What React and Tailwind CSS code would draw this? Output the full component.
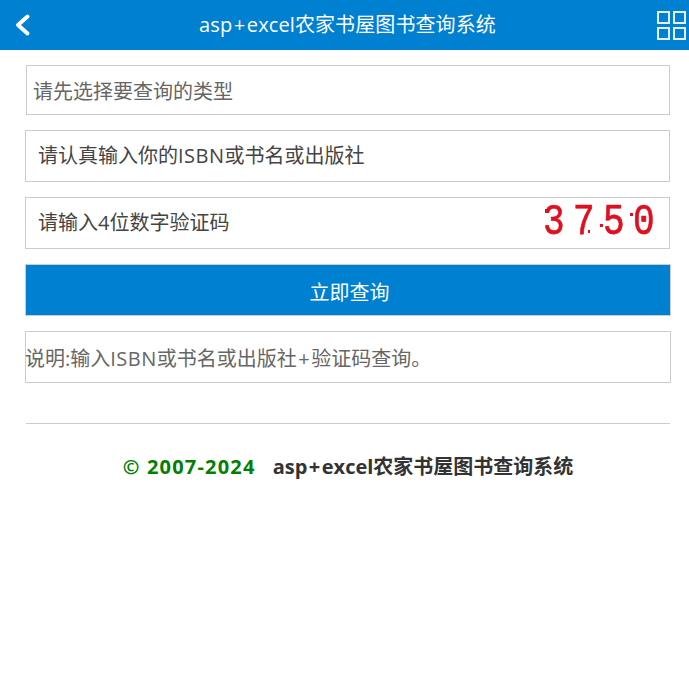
const font = { fontFamily: '"Open Sans", "Noto Sans CJK SC", sans-serif' };

const BackIcon = () => (
  <svg width="18" height="24" viewBox="0 0 18 24" fill="none">
    <path d="M13.5 3.5 L4 12 L13.5 20.5" stroke="#fff" strokeWidth="4" strokeLinecap="round" strokeLinejoin="round" />
  </svg>
);

const GridIcon = () => (
  <div className="grid grid-cols-2 gap-[3px]">
    {[0, 1, 2, 3].map((i) => (
      <div key={i} className="w-[13px] h-[13px] border-2 border-[#e4eff9]" />
    ))}
  </div>
);

// captcha picture: the digits plus its noise dots
const Captcha = () => (
  <span className="relative block w-[114px] h-[34px]">
    <span className="absolute left-[-1px] top-[-2px] text-[36px] leading-[38px] scale-y-[1.25] text-[#e01020] tracking-[8.4px] blur-[0.3px] [-webkit-text-stroke:0.6px_#e01020] font-['Liberation_Mono']">
      3750
    </span>
    <svg className="absolute inset-0" width="114" height="34" viewBox="0 0 114 34" fill="#e01020">
      <rect x="1" y="3" width="3" height="4" />
      <rect x="44" y="24" width="2" height="3" />
      <rect x="56" y="18" width="3" height="3" />
      <rect x="86" y="7" width="3" height="3" />
    </svg>
  </span>
);

const Plus = () => <span className="mx-[1.5px]">+</span>;
const Isbn = () => <span className="tracking-[0.5px]">ISBN</span>;

export default function App() {
  return (
    <div className="min-h-[685px] bg-white text-[#333]" style={font}>
      {/* Header */}
      <header className="h-[50px] bg-[#0080d0] flex items-center justify-between pl-[14px] pr-[3px] text-white">
        <BackIcon />
        <h1 className="text-[20px] font-normal tracking-[0.1px] ml-[6px]">asp<Plus />excel农家书屋图书查询系统</h1>
        <GridIcon />
      </header>

      <main className="pl-[25px] pr-[18px] pt-[15px]">
        {/* Search form */}
        <div className="h-[50px] ml-px mr-px border border-[#ccc] flex items-center pl-[6px] pt-[4px] text-[20px] text-[#666]">
          请先选择要查询的类型
        </div>
        <div className="h-[52px] mt-[15px] mr-px border border-[#ccc] flex items-center pl-[12px] text-[20px] text-[#444]">
          <span>请认真输入你的<Isbn />或书名或出版社</span>
        </div>
        <div className="h-[52px] mt-[15px] mr-px border border-[#ccc] flex items-center justify-between pl-[12px] pr-[11px] text-[20px] text-[#444]">
          <span>请输入4位数字验证码</span>
          <Captcha />
        </div>
        <button className="block w-full h-[52px] mt-[15px] pt-[6px] pl-[3px] bg-[#0080d0] text-white text-[20px] border border-[#ccc]">
          立即查询
        </button>
        <div className="h-[52px] mt-[15px] border border-[#ccc] flex items-center pt-[3px] text-[20px] text-[#666]">
          <span className="-ml-px">说明:输入<Isbn />或书名或出版社<Plus />验证码查询。</span>
        </div>

        <hr className="mt-[40px] ml-px mr-px border-[#ccc]" />

        {/* Footer */}
        <p className="mt-[30px] text-center text-[20px] font-bold leading-[26px]">
          <span className="text-[#008000] tracking-[1.2px]">© 2007-2024</span>
          <span className="ml-[17px] text-[#333]">asp<Plus />excel农家书屋图书查询系统</span>
        </p>
      </main>
    </div>
  );
}
